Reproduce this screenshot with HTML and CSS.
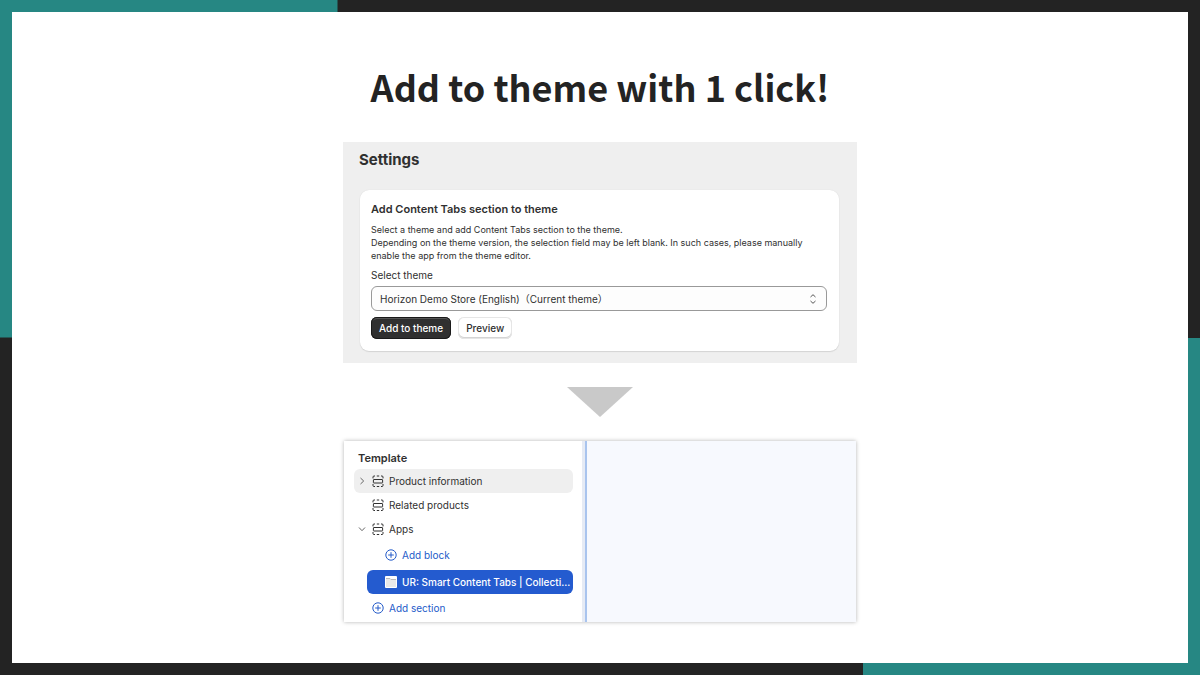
FILE: index.html
```html
<!DOCTYPE html>
<html lang="en">
<head>
    <meta charset="UTF-8">
    <meta name="viewport" content="width=device-width, initial-scale=1.0">
    <title>Add to theme</title>
    <link rel="stylesheet" href="styles.css">
</head>
<body>
    <!-- Shared icons -->
    <svg class="sprite" aria-hidden="true">
        <symbol id="icon-section" viewBox="0 0 12 12">
            <path d="M1 3.4V2Q1 1 2 1H3M4.8 1H7.2M9 1H10Q11 1 11 2V3.4M1 9V10.5Q1 11.5 2 11.5H3M4.8 11.5H7.2M9 11.5H10Q11 11.5 11 10.5V9"/>
            <rect x="1.4" y="4.5" width="9.2" height="3.5" rx=".4"/>
        </symbol>
        <symbol id="icon-plus" viewBox="0 0 12 12">
            <circle cx="6" cy="6" r="5.2"/>
            <path d="M6 3.2V8.8M3.2 6H8.8"/>
        </symbol>
    </svg>

    <main class="slide">
        <h1>Add to theme with 1 click!</h1>

        <section class="settings">
            <h2>Settings</h2>
            <div class="card">
                <h3>Add Content Tabs section to theme</h3>
                <p>Select a theme and add Content Tabs section to the theme.<br>Depending on the theme version, the selection field may be left blank. In such cases, please manually<br>enable the app from the theme editor.</p>
                <label for="theme">Select theme</label>
                <div class="select-wrap">
                    <select id="theme">
                        <option>Horizon Demo Store (English)（Current theme）</option>
                    </select>
                    <svg class="select-icon" viewBox="0 0 8 12" aria-hidden="true">
                        <path d="M1.5 4L4 1.7L6.5 4M1.5 8L4 10.3L6.5 8"/>
                    </svg>
                </div>
                <div class="buttons">
                    <button class="btn btn-dark" type="button">Add to theme</button>
                    <button class="btn" type="button">Preview</button>
                </div>
            </div>
        </section>

        <svg class="arrow" viewBox="0 0 66 30" aria-hidden="true">
            <path d="M0 0H66L33 30Z"/>
        </svg>

        <section class="editor">
            <nav class="sidebar">
                <h2>Template</h2>
                <ul class="tree">
                    <li><a class="row active" href="#">
                        <svg class="chevron" viewBox="0 0 8 8"><path d="M2.5 1L5.7 4L2.5 7"/></svg>
                        <svg class="icon"><use href="#icon-section"/></svg>
                        <span>Product information</span>
                    </a></li>
                    <li><a class="row level-1" href="#">
                        <svg class="icon"><use href="#icon-section"/></svg>
                        <span>Related products</span>
                    </a></li>
                    <li><a class="row" href="#">
                        <svg class="chevron" viewBox="0 0 8 8"><path d="M1 2.5L4 5.7L7 2.5"/></svg>
                        <svg class="icon"><use href="#icon-section"/></svg>
                        <span>Apps</span>
                    </a></li>
                    <li><button class="row add level-2" type="button">
                        <svg class="icon"><use href="#icon-plus"/></svg>
                        <span>Add block</span>
                    </button></li>
                    <li><a class="row selected" href="#">
                        <svg class="icon app-icon" viewBox="0 0 12 12">
                            <rect class="app-bg" width="12" height="12" rx="1"/>
                            <path class="app-page" d="M1 3H11V11H1Z"/>
                            <path class="app-tab" d="M1 2.5H5L6 3.5H11"/>
                        </svg>
                        <span>UR: Smart Content Tabs | Collecti...</span>
                    </a></li>
                    <li><button class="row add level-1" type="button">
                        <svg class="icon"><use href="#icon-plus"/></svg>
                        <span>Add section</span>
                    </button></li>
                </ul>
            </nav>
            <div class="preview"></div>
        </section>
    </main>
</body>
</html>
```
FILE: styles.css
```css
/* General Styles */
* {
    box-sizing: border-box;
}

body {
    margin: 0;
    padding: 12px;
    min-height: 100vh;
    display: flex;
    font-family: Inter, "Noto Sans CJK JP", sans-serif;
    font-size: 10px;
    color: #303030;
    /* teal corners on a dark frame */
    background:
        linear-gradient(#268783, #268783) 0 0 / 50vh 50vh no-repeat,
        linear-gradient(#268783, #268783) 100% 100% / 50vh 50vh no-repeat,
        #232323;
}

h1, h2, h3, p, ul {
    margin: 0;
    padding: 0;
}

svg {
    fill: none;
    stroke: currentColor;
    flex: none;
}

.sprite {
    position: absolute;
    width: 0;
    height: 0;
}

.slide {
    flex: 1;
    display: flex;
    flex-direction: column;
    align-items: center;
    padding: 46px 16px 40px;
    background: #fff;
}

h1 {
    font-family: "Noto Sans CJK JP", sans-serif;
    font-size: 36px;
    line-height: 56px;
    font-weight: bold;
    color: #232323;
    margin-bottom: 28px;
}

/* Settings */
.settings {
    width: 100%;
    max-width: 514px;
    padding: 8px 17px 12px 16px;
    background: #efefef;
}

.settings h2 {
    font-size: 15px;
    line-height: 20px;
    font-weight: 700;
    margin-bottom: 20px;
}

.card {
    margin: 0 1px;
    padding: 12px 12px 12px 11px;
    background: #fff;
    border-radius: 9px;
    box-shadow: 0 1px 1px #d4d4d4, 0 0 1px #d4d4d4;
}

.card h3 {
    font-size: 11px;
    line-height: 15px;
    font-weight: 600;
    margin-bottom: 6px;
}

.card p {
    font-size: 9px;
    line-height: 13px;
    margin-bottom: 6px;
}

.card label {
    display: block;
    line-height: 14px;
    margin-bottom: 4px;
}

.select-wrap {
    position: relative;
    margin-bottom: 6px;
}

select {
    appearance: none;
    display: block;
    width: 100%;
    height: 25px;
    padding: 0 24px 0 8px;
    font-family: inherit;
    font-size: 10px;
    color: #303030;
    background: #fdfdfd;
    border: 1px solid #999;
    border-radius: 6px;
}

.select-icon {
    position: absolute;
    right: 10px;
    top: 7px;
    width: 8px;
    height: 12px;
    color: #555;
    pointer-events: none;
}

.buttons {
    display: flex;
    gap: 7px;
}

.btn {
    height: 22px;
    padding: 0 8px;
    font-family: inherit;
    font-size: 10px;
    font-weight: 500;
    color: #303030;
    background: #fff;
    border: none;
    border-radius: 6px;
    box-shadow: inset 0 0 0 1px #e6e6e6, inset 0 -1px 0 1px #d4d4d4;
    cursor: pointer;
}

.btn-dark {
    color: #fff;
    background: #303030;
    box-shadow: inset 0 0 0 1px #1a1a1a, inset 0 2px 0 #555;
}

.arrow {
    width: 66px;
    height: 30px;
    margin: 24px 0;
    fill: #c9c9c9;
    stroke: none;
}

/* Theme editor */
.editor {
    display: flex;
    width: 100%;
    max-width: 512px;
    background: #f7f9fe;
    box-shadow: 0 0 4px rgba(0, 0, 0, 0.3);
}

.sidebar {
    width: 241px;
    padding: 8px 9px 0 10px;
    background: #fff;
    border-right: 3px solid #e6ebf5;
}

.preview {
    flex: 1;
    border-left: 2px solid #a9c4ee;
}

.sidebar h2 {
    font-size: 11px;
    line-height: 18px;
    font-weight: 600;
    padding-left: 4px;
    margin-bottom: 2px;
}

.tree {
    list-style: none;
}

.row {
    display: flex;
    align-items: center;
    gap: 5px;
    width: 100%;
    height: 24px;
    padding: 0 6px 0 4px;
    font-family: inherit;
    font-size: 10px;
    color: #303030;
    text-decoration: none;
    background: none;
    border: none;
    border-radius: 6px;
}

.row span {
    white-space: nowrap;
}

.icon {
    width: 12px;
    height: 12px;
}

.chevron {
    width: 8px;
    height: 8px;
    margin-right: 1px;
    color: #666;
}

.level-1 {
    padding-left: 18px;
}

.level-2 {
    padding-left: 31px;
}

.active {
    background: #efefef;
}

.add {
    height: 28px;
    color: #245bc9;
    cursor: pointer;
}

.selected {
    width: auto;
    margin: 1px 0 0 13px;
    padding: 0 0 0 18px;
    font-weight: 500;
    color: #fff;
    background: #245bcf;
}

.app-icon {
    stroke: none;
}

.app-bg {
    fill: #fff;
}

.app-page {
    fill: #e9e9e9;
}

.app-tab {
    stroke: #bbb;
}
```
